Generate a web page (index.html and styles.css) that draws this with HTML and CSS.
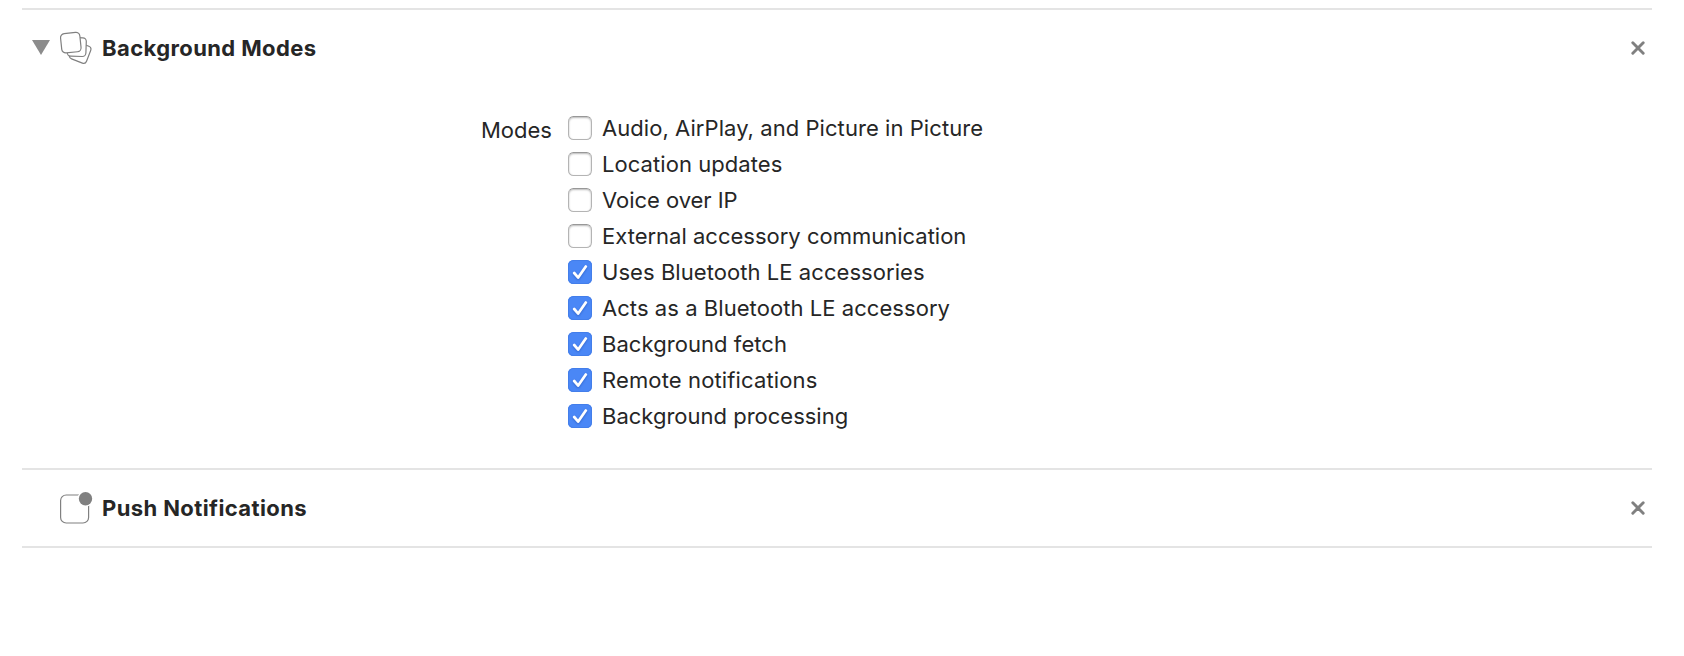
FILE: index.html
```
<!DOCTYPE html>
<html lang="en">
<head>
<meta charset="utf-8">
<title>Capabilities</title>
<link rel="stylesheet" href="styles.css">
</head>
<body>
<svg width="0" height="0" class="defs">
  <symbol id="tick" viewBox="0 0 24 24"><path d="M6.2 13 10.2 17.6 17.8 6.5" fill="none" stroke="#fff" stroke-width="2.7" stroke-linecap="round" stroke-linejoin="round"/></symbol>
  <symbol id="cross" viewBox="0 0 14 14"><path d="M1.8 1.8 12.2 12.2M12.2 1.8 1.8 12.2" stroke="#808080" stroke-width="2.9" stroke-linecap="round"/></symbol>
</svg>
<main class="capabilities">
  <section class="capability capability-open">
    <header class="head">
      <svg class="arrow" viewBox="0 0 18 15"><path d="M0 0H18L9 15Z" fill="#8c8c8c"/></svg>
      <svg class="icon" viewBox="0 0 34 34" fill="#fff" stroke="#808080" stroke-width="1.2">
        <rect x="12.2" y="12.6" width="18" height="18" rx="3.2" transform="rotate(21 21.2 21.6)"/>
        <rect x="8.4" y="6.6" width="18.7" height="18.7" rx="3.6" transform="rotate(2 17.3 15.9)"/>
        <rect x="2.1" y="2" width="19.4" height="19.4" rx="4" transform="rotate(-6 11.8 11.7)"/>
      </svg>
      <h2 class="title">Background Modes</h2>
      <svg class="close"><use href="#cross"/></svg>
    </header>
    <div class="body">
      <div class="label">Modes</div>
      <ul class="modes">
        <li class="mode"><span class="box"></span><span class="airy">Audio, AirPlay, and Picture in Picture</span></li>
        <li class="mode"><span class="box"></span><span class="airy">Location updates</span></li>
        <li class="mode"><span class="box"></span><span class="tight">Voice over IP</span></li>
        <li class="mode"><span class="box"></span><span>External accessory communication</span></li>
        <li class="mode"><span class="box on"><svg class="tick"><use href="#tick"/></svg></span><span class="airy">Uses Bluetooth LE accessories</span></li>
        <li class="mode"><span class="box on"><svg class="tick"><use href="#tick"/></svg></span><span class="airy">Acts as a Bluetooth LE accessory</span></li>
        <li class="mode"><span class="box on"><svg class="tick"><use href="#tick"/></svg></span><span class="airy">Background fetch</span></li>
        <li class="mode"><span class="box on"><svg class="tick"><use href="#tick"/></svg></span><span class="wide">Remote notifications</span></li>
        <li class="mode"><span class="box on"><svg class="tick"><use href="#tick"/></svg></span><span>Background processing</span></li>
      </ul>
    </div>
  </section>
  <section class="capability">
    <header class="head">
      <span class="arrow"></span>
      <svg class="icon" viewBox="0 0 34 34">
        <rect x="1.6" y="4" width="28" height="28" rx="5.6" fill="#fff" stroke="#808080" stroke-width="1.2"/>
        <circle cx="26.5" cy="7.7" r="8" fill="#fff"/>
        <circle cx="26.5" cy="7.7" r="6.7" fill="#808080"/>
      </svg>
      <h2 class="title">Push Notifications</h2>
      <svg class="close"><use href="#cross"/></svg>
    </header>
  </section>
</main>
</body>
</html>
```
FILE: styles.css
```
* { box-sizing: border-box; }
body {
  margin: 0;
  background: #fff;
  color: #262626;
  font: 22px/36px Inter, "Liberation Sans", sans-serif;
}
.defs { display: block; }
.capabilities {
  margin: 8px 32px 0 22px;
  border-bottom: 2px solid #e4e4e4;
}
.capability { height: 78px; border-top: 2px solid #e4e4e4; }
.capability-open { height: 460px; }
.head {
  display: flex;
  align-items: center;
  height: 76px;
  padding: 0 7px 0 10px;
}
.arrow { width: 18px; height: 15px; margin: 0 9px 1px 0; }
.icon { width: 34px; height: 34px; margin-right: 9px; }
.title { margin: 0; font-size: 22px; font-weight: 700; letter-spacing: .4px; white-space: nowrap; }
.close { width: 14px; height: 14px; margin-left: auto; }
.body { display: flex; padding: 24px 0 0 459px; }
.label { width: 87px; padding-top: 2px; }
.modes { margin: 0; padding: 0; list-style: none; }
.mode { display: flex; align-items: center; gap: 10px; height: 36px; white-space: nowrap; }
.airy { letter-spacing: .06px; }
.wide { letter-spacing: .13px; }
.tight { letter-spacing: -.04px; }
.box {
  width: 24px;
  height: 24px;
  border: 1px solid #b4b4b4;
  border-top-color: #989898;
  border-radius: 5.5px;
  background: #fff;
  box-shadow: inset 0 1px 2px rgba(0, 0, 0, .28);
}
.box.on { border: 0; background: #4a87f6; box-shadow: inset 0 0 0 1px #437eea; }
.tick { display: block; width: 24px; height: 24px; filter: drop-shadow(0 1px 1px rgba(0, 40, 130, .35)); }
```
